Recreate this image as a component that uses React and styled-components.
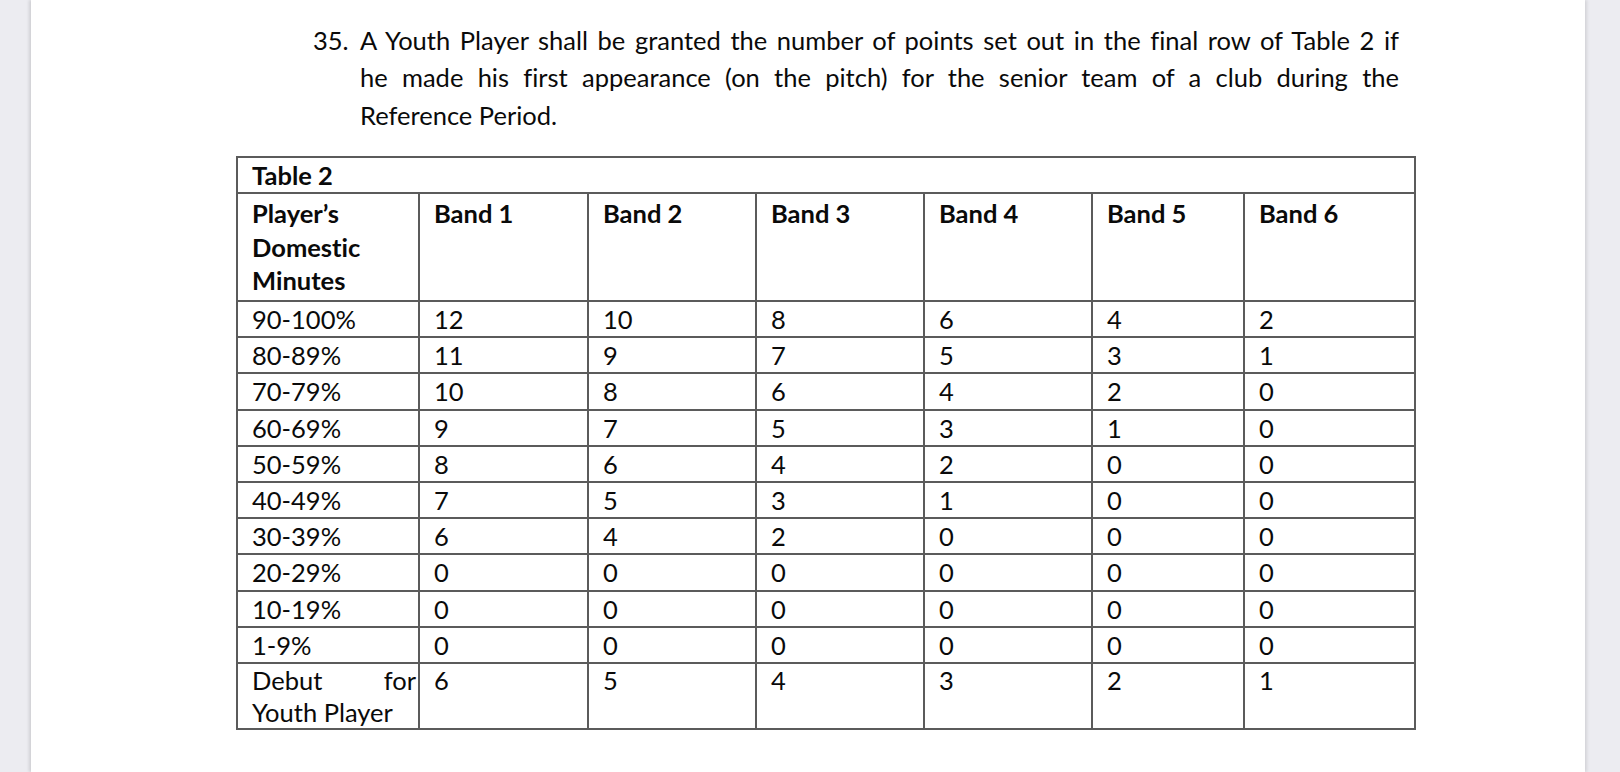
import React from "react";
import styled, { createGlobalStyle } from "styled-components";

const Global = createGlobalStyle`
  html, body { margin: 0; padding: 0; }
  body {
    background: #ececf1;
    font-family: Lato, "Open Sans", sans-serif;
    font-variant-ligatures: none;
    color: #0a0a0a;
    overflow: hidden;
  }
`;

const Viewport = styled.div`
  display: flex;
  min-height: 100vh;
  width: 1620px;
`;

const Page = styled.main`
  margin-left: 31px;
  width: 1554px;
  min-height: 772px;
  background: #ffffff;
  box-shadow: -2px 0 3px rgba(0, 0, 0, 0.12), 2px 0 3px rgba(0, 0, 0, 0.1);
  padding: 22px 0 0 0;
  box-sizing: border-box;
`;

const Clause = styled.section`
  display: flex;
  margin-left: 282px;
  width: 1086px;
  font-size: 25.5px;
  line-height: 37.4px;
`;

const ClauseNumber = styled.div`
  flex: 0 0 47px;
`;

const ClauseBody = styled.div`
  flex: 1;
`;

const Line = styled.div`
  text-align: ${(p) => (p.$justify ? "justify" : "left")};
  text-align-last: ${(p) => (p.$justify ? "justify" : "left")};
  white-space: nowrap;
`;

const Table = styled.table`
  margin: 22px 0 0 205px;
  width: 1178px;
  table-layout: fixed;
  border-collapse: collapse;
  font-size: 25.5px;
  line-height: 33.2px;
`;

const Cell = styled.td`
  border: 2px solid #5b5b5b;
  padding: ${(p) => p.$padTop ?? 1}px ${(p) => (p.$tightRight ? "2px" : "14px")}
    ${(p) => p.$padBottom || 0}px 14px;
  line-height: ${(p) => (p.$compact ? "31.6px" : "33.2px")};
  vertical-align: top;
  font-weight: ${(p) => (p.$bold ? 700 : 400)};
  text-align: ${(p) => (p.$justify ? "justify" : "left")};
  color: #0a0a0a;
`;

const widths = [182, 169, 168, 168, 168, 152, 171];

const rows = [
  ["90-100%", 12, 10, 8, 6, 4, 2],
  ["80-89%", 11, 9, 7, 5, 3, 1],
  ["70-79%", 10, 8, 6, 4, 2, 0],
  ["60-69%", 9, 7, 5, 3, 1, 0],
  ["50-59%", 8, 6, 4, 2, 0, 0],
  ["40-49%", 7, 5, 3, 1, 0, 0],
  ["30-39%", 6, 4, 2, 0, 0, 0],
  ["20-29%", 0, 0, 0, 0, 0, 0],
  ["10-19%", 0, 0, 0, 0, 0, 0],
  ["1-9%", 0, 0, 0, 0, 0, 0],
];

export default function App() {
  return (
    <>
      <Global />
      <Viewport>
        <Page>
          <Clause>
            <ClauseNumber>35.</ClauseNumber>
            <ClauseBody>
              <Line $justify>
                A Youth Player shall be granted the number of points set out in the final row of Table 2 if
              </Line>
              <Line $justify>
                he made his first appearance (on the pitch) for the senior team of a club during the
              </Line>
              <Line>Reference Period.</Line>
            </ClauseBody>
          </Clause>
          <Table>
            <colgroup>
              {widths.map((w, i) => (
                <col key={i} style={{ width: w }} />
              ))}
            </colgroup>
            <tbody>
              <tr>
                <Cell colSpan={7} $bold>
                  Table 2
                </Cell>
              </tr>
              <tr>
                <Cell $bold $padTop={3} $padBottom={3}>
                  Player’s Domestic Minutes
                </Cell>
                {[1, 2, 3, 4, 5, 6].map((b) => (
                  <Cell key={b} $bold $padTop={3}>
                    Band {b}
                  </Cell>
                ))}
              </tr>
              {rows.map((r) => (
                <tr key={r[0]}>
                  {r.map((v, i) => (
                    <Cell key={i}>{v}</Cell>
                  ))}
                </tr>
              ))}
              <tr>
                <Cell $justify $tightRight $compact>
                  Debut for Youth Player
                </Cell>
                {[6, 5, 4, 3, 2, 1].map((v, i) => (
                  <Cell key={i} $compact>
                    {v}
                  </Cell>
                ))}
              </tr>
            </tbody>
          </Table>
        </Page>
      </Viewport>
    </>
  );
}
